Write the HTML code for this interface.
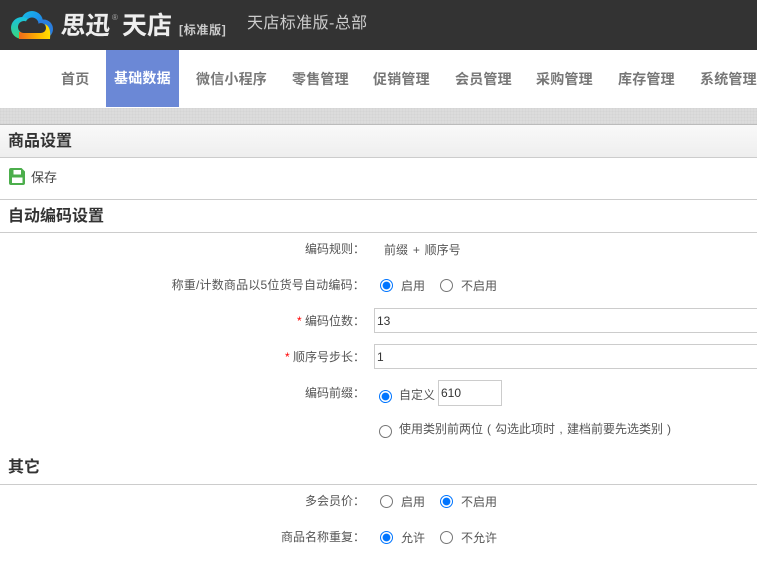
<!DOCTYPE html>
<html><head><meta charset="utf-8">
<style>
html,body{margin:0;padding:0;background:#fff}
body{width:757px;height:569px;overflow:hidden;position:relative;font-family:"Liberation Sans","Noto Sans CJK SC",sans-serif;color:#555;font-size:12px}
.a{position:absolute;white-space:nowrap}
.nav{top:69px;font-size:14px;font-weight:bold;color:#777;line-height:20px;letter-spacing:.2px}
.h{left:8px;font-size:16px;font-weight:bold;color:#333;line-height:20px}
.l{right:392px;line-height:16px;color:#555}
.t{line-height:16px;color:#555}
.line{left:0;width:757px;height:1px;background:#ccc}
input[type=radio]{position:absolute;margin:0;width:13px;height:13px}
.i{background:#fff;border:1px solid #ccc;box-sizing:border-box;font-size:12px;color:#333;padding-left:2px;line-height:24px}
.s{color:#f00;font-size:12px}
.p{display:inline-block;width:12px;text-align:center}
.band{background-color:#dcdcdc;background-image:repeating-linear-gradient(90deg,rgba(0,0,0,.02) 0 1px,transparent 1px 3px),repeating-linear-gradient(0deg,rgba(0,0,0,.02) 0 1px,transparent 1px 3px)}
</style></head><body>
<div class="a" style="left:0;top:0;width:757px;height:50px;background:#333"></div>
<svg class="a" style="left:0;top:0" width="60" height="50" viewBox="0 0 60 50">
<defs>
<linearGradient id="g" x1="0" y1="0" x2="1" y2="1"><stop offset="0" stop-color="#18c0e0"/><stop offset=".45" stop-color="#1a9cec"/><stop offset="1" stop-color="#2a6fd8"/></linearGradient>
<linearGradient id="gl" x1="0" y1="0" x2="0" y2="1"><stop offset="0" stop-color="#18c0e0"/><stop offset="1" stop-color="#3ad67a"/></linearGradient>
<linearGradient id="y" x1="0" y1="0" x2="1" y2="0"><stop offset="0" stop-color="#ee6a1c"/><stop offset=".6" stop-color="#ffb400"/><stop offset="1" stop-color="#ffe000"/></linearGradient>
<clipPath id="c"><rect x="0" y="0" width="60" height="39"/></clipPath>
</defs>
<g clip-path="url(#c)">
<circle cx="32" cy="22" r="11" fill="url(#g)"/>
<circle cx="43.500" cy="29" r="9.500" fill="#2a7ede"/>
<circle cx="22" cy="28" r="11" fill="url(#gl)"/>
<path d="M19 39V32H44C46 30 46 26 45 24C49 26 51 30 50 39z" fill="url(#y)"/>
<g fill="#333">
<circle cx="24" cy="27" r="6"/>
<circle cx="32" cy="24" r="6.500"/>
<circle cx="41" cy="28" r="5"/>
<rect x="24" y="25" width="17" height="8"/>
</g>
</g>
</svg>
<div class="a" style="left:61px;top:11px;font-size:25px;font-weight:bold;color:#eee;line-height:30px;letter-spacing:-.5px;transform:skewX(-6deg)">思迅</div>
<div class="a" style="left:112px;top:13px;font-size:8px;color:#aaa;line-height:10px">®</div>
<div class="a" style="left:122px;top:11px;font-size:25px;font-weight:bold;color:#eee;line-height:30px">天店</div>
<div class="a" style="left:179px;top:22px;font-size:12px;font-weight:bold;color:#ccc;line-height:16px;letter-spacing:.7px">[标准版]</div>
<div class="a" style="left:247px;top:13px;font-size:16px;color:#ccc;line-height:22px;letter-spacing:.4px">天店标准版-总部</div>

<div class="a" style="left:106px;top:50px;width:73px;height:57px;background:#6b88d6"></div>
<div class="a nav" style="left:61px">首页</div>
<div class="a nav" style="left:114px;top:68px;color:#fff">基础数据</div>
<div class="a nav" style="left:196px">微信小程序</div>
<div class="a nav" style="left:292px">零售管理</div>
<div class="a nav" style="left:373px">促销管理</div>
<div class="a nav" style="left:455px">会员管理</div>
<div class="a nav" style="left:536px">采购管理</div>
<div class="a nav" style="left:618px">库存管理</div>
<div class="a nav" style="left:700px">系统管理</div>

<div class="a band" style="left:0;top:108px;width:757px;height:16px;border-bottom:1px solid #bbb"></div>
<div class="a" style="left:0;top:125px;width:757px;height:32px;background:linear-gradient(#f9f9f9,#eee)"></div>
<div class="a line" style="top:157px"></div>
<div class="a h" style="top:132px">商品设置</div>
<svg class="a" style="left:9px;top:168px" width="16" height="17" viewBox="0 0 16 17">
<path d="M2 0H12.500L16 3.500V15a2 2 0 0 1-2 2H2a2 2 0 0 1-2-2V2a2 2 0 0 1 2-2z" fill="#4cae4c"/>
<rect x="4.500" y="2" width="7.500" height="4.500" fill="#fff"/>
<rect x="3" y="9.500" width="10.500" height="5.500" fill="#fff"/>
</svg>
<div class="a t" style="left:31px;top:170px;color:#444;font-size:13px">保存</div>
<div class="a line" style="top:199px"></div>
<div class="a h" style="top:207px">自动编码设置</div>
<div class="a line" style="top:232px"></div>

<div class="a l" style="top:241px">编码规则：</div>
<div class="a t" style="left:384px;top:242px;word-spacing:1.500px">前缀 + 顺序号</div>

<div class="a l" style="top:277px;letter-spacing:.2px">称重/计数商品以5位货号自动编码：</div>
<input type="radio" name="a" checked style="left:380px;top:279px">
<div class="a t" style="left:401px;top:278px">启用</div>
<input type="radio" name="a" style="left:440px;top:279px">
<div class="a t" style="left:461px;top:278px">不启用</div>

<div class="a l" style="top:313px"><span class="s">* </span>编码位数：</div>
<div class="a i" style="left:374px;top:308px;width:390px;height:25px">13</div>

<div class="a l" style="top:349px"><span class="s">* </span>顺序号步长：</div>
<div class="a i" style="left:374px;top:344px;width:390px;height:25px">1</div>

<div class="a l" style="top:385px">编码前缀：</div>
<input type="radio" name="b" checked style="left:379px;top:390px">
<div class="a t" style="left:399px;top:387px">自定义</div>
<div class="a i" style="left:438px;top:380px;width:64px;height:26px;padding-left:2px;line-height:24px">610</div>

<input type="radio" name="b" style="left:379px;top:425px">
<div class="a t" style="left:399px;top:421px">使用类别前两位<span class="p">(</span>勾选此项时<span class="p">,</span>建档前要先选类别<span class="p">)</span></div>

<div class="a h" style="top:458px">其它</div>
<div class="a line" style="top:484px"></div>

<div class="a l" style="top:493px">多会员价：</div>
<input type="radio" name="c" style="left:380px;top:495px">
<div class="a t" style="left:401px;top:494px">启用</div>
<input type="radio" name="c" checked style="left:440px;top:495px">
<div class="a t" style="left:461px;top:494px">不启用</div>

<div class="a l" style="top:529px">商品名称重复：</div>
<input type="radio" name="d" checked style="left:380px;top:531px">
<div class="a t" style="left:401px;top:530px">允许</div>
<input type="radio" name="d" style="left:440px;top:531px">
<div class="a t" style="left:461px;top:530px">不允许</div>
</body></html>
